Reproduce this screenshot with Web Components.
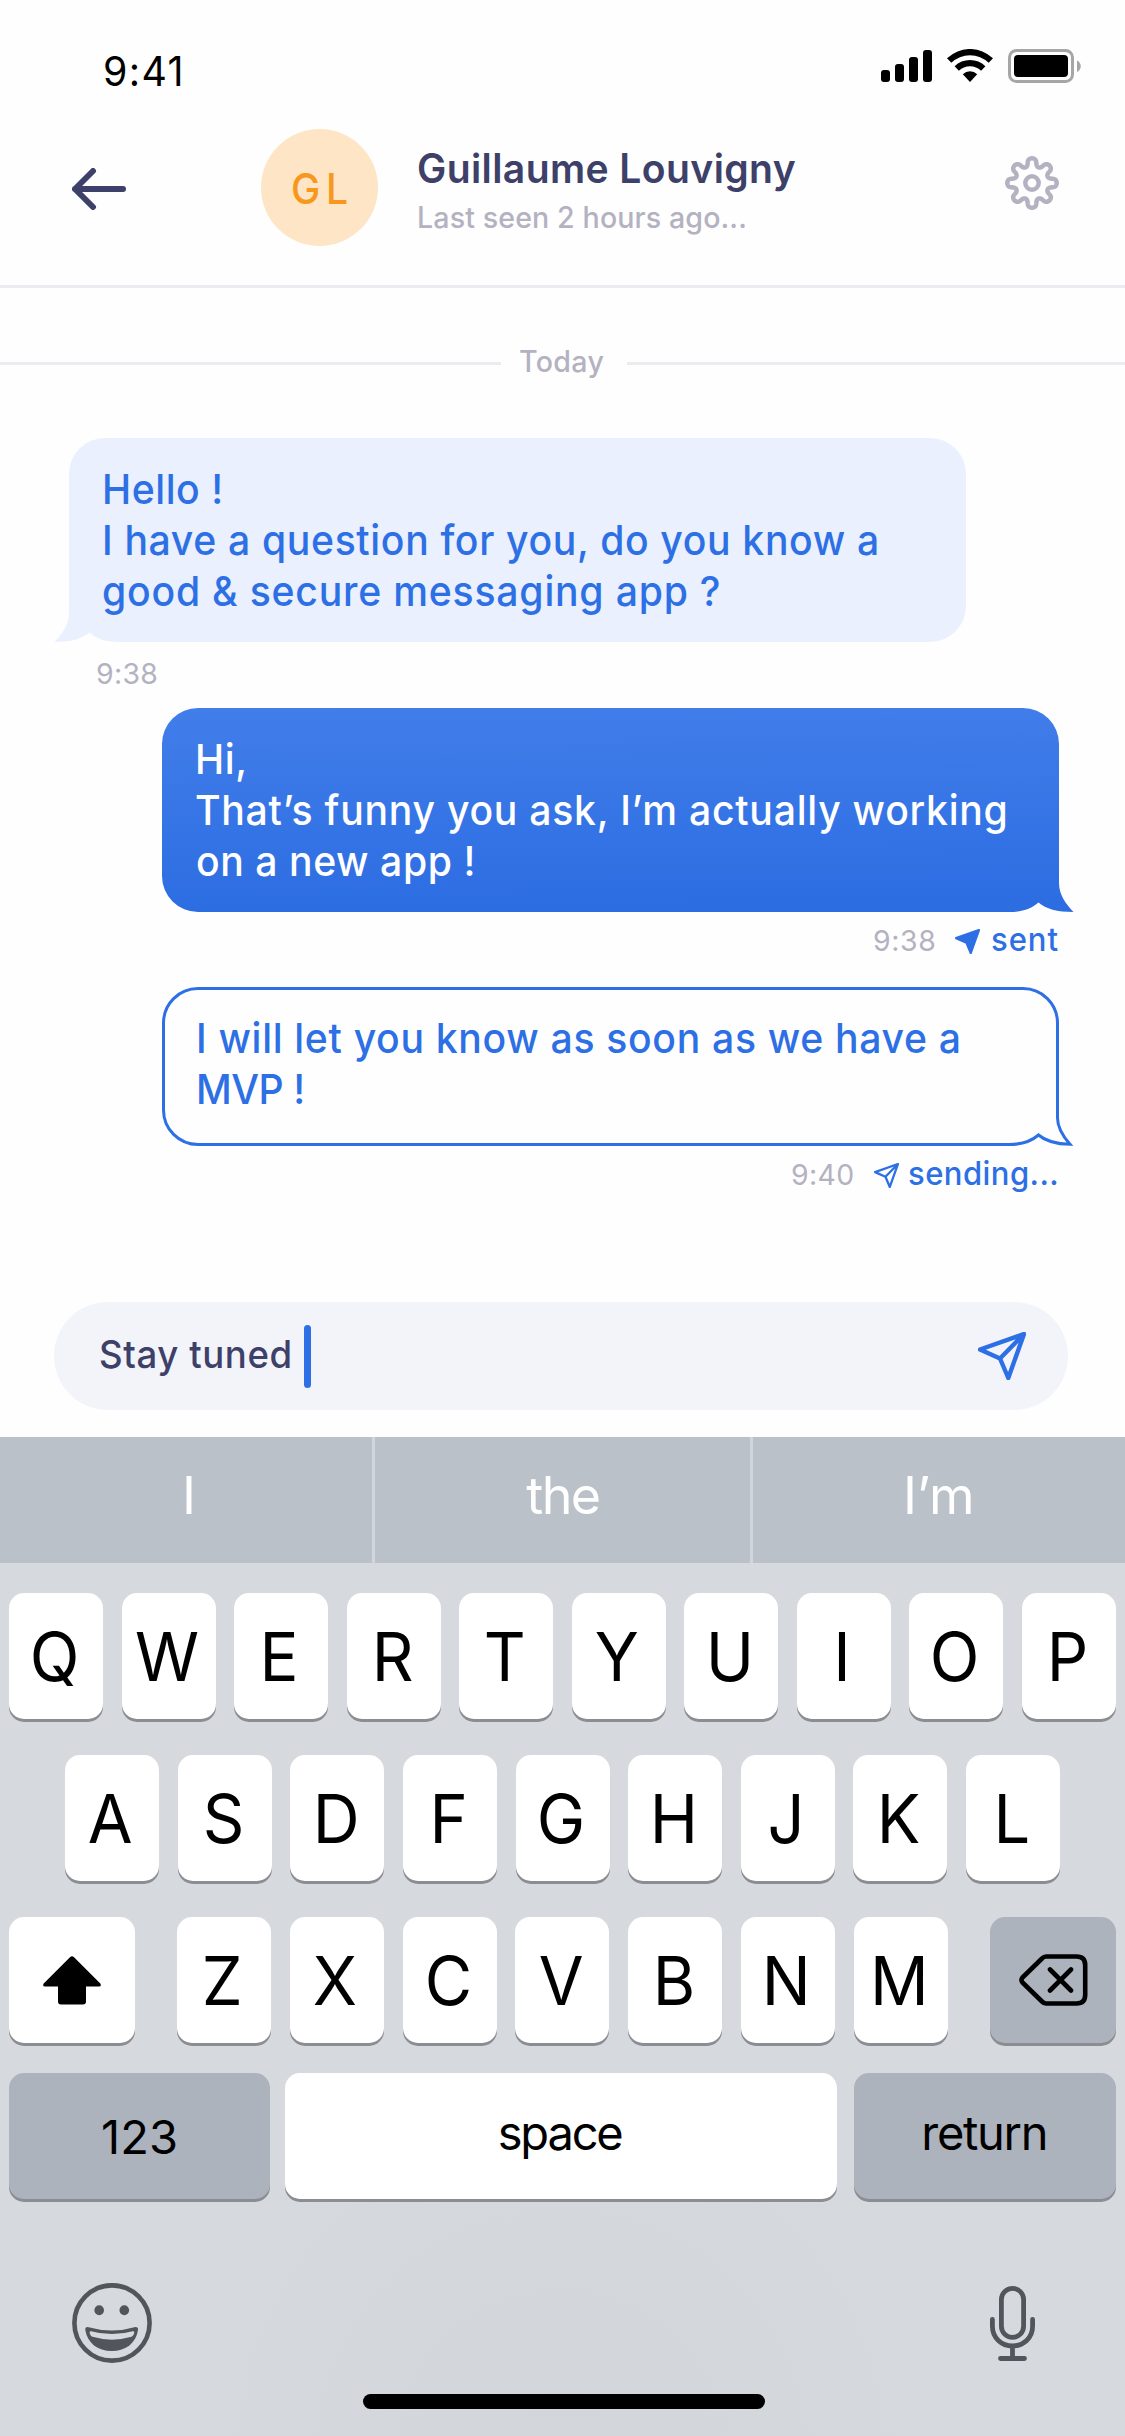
<!DOCTYPE html>
<html lang="en">
<head>
<meta charset="utf-8">
<title>Messaging</title>
<style>
html,body{margin:0;padding:0;background:#fefefe}
body{width:1125px;height:2436px;overflow:hidden;font-family:Inter,"Liberation Sans",sans-serif;-webkit-font-smoothing:antialiased}
</style>
</head>
<body>
<chat-screen></chat-screen>
<script>
const define = (name, html, init) => customElements.define(name, class extends HTMLElement {
  connectedCallback() {
    if (this.shadowRoot) return;
    const root = this.attachShadow({ mode: 'open' });
    root.innerHTML = typeof html === 'function' ? html(this) : html;
    if (init) init(this, root);
  }
});

/* One line of text, tracked so that its ink is exactly `w` pixels wide.
   --narrow condenses the letterforms before tracking. */
const pen = document.createElement('canvas').getContext('2d');
define('fit-text', `<style>
  :host{display:block;white-space:pre;flex:none}
  span{display:block;width:max-content;transform-origin:0 0}
</style><span><slot></slot></span>`, (host, root) => {
  const cs = getComputedStyle(host), text = host.textContent, w = +host.getAttribute('w');
  const k = parseFloat(cs.getPropertyValue('--narrow')) || 1;
  pen.font = `${cs.fontWeight} ${cs.fontSize} ${cs.fontFamily}`;
  const m = pen.measureText(text);
  const ink = m.actualBoundingBoxLeft + m.actualBoundingBoxRight;
  const ls = text.length > 1 ? (w / k - ink) / (text.length - 1) : 0;
  const span = root.querySelector('span');
  host.style.width = w + 'px';
  span.style.letterSpacing = ls.toFixed(3) + 'px';
  span.style.marginLeft = (m.actualBoundingBoxLeft * k).toFixed(2) + 'px';
  span.style.marginRight = '-200px';
  if (k !== 1) span.style.transform = `scaleX(${k})`;
});

define('status-bar', `<style>
  :host{display:flex;justify-content:space-between;box-sizing:border-box;height:129px;padding:46px 44px 0 105px;font-size:41px;line-height:50px;color:#000;--narrow:.96}
  svg{display:block;margin-top:3px}
</style>
<fit-text w="76">9:41</fit-text>
<svg width="200" height="34" viewBox="0 0 200 34">
  <rect x="0" y="21" width="9" height="12" rx="3"/><rect x="14" y="15" width="9" height="18" rx="3"/>
  <rect x="28" y="8" width="9" height="25" rx="3"/><rect x="42" y="1" width="9" height="32" rx="3"/>
  <path d="M66 9.3A33 33 0 0 1 112 9.3L107.7 13.8A26.800 26.800 0 0 0 70.300 13.800Z"/>
  <path d="M73.600 17.200A22 22 0 0 1 104.400 17.200L100.100 21.800A15.700 15.700 0 0 0 77.900 21.800Z"/>
  <path d="M81.800 25.200A10.500 10.500 0 0 1 96.200 25.200L89 33Z"/>
  <rect x="128.500" y="1.500" width="63" height="31" rx="7" fill="none" stroke="#a6a6a6" stroke-width="3"/>
  <rect x="133" y="6" width="54" height="22" rx="4"/>
  <path d="M196 11.500C201 14 201 20.500 196 23Z" fill="#a6a6a6"/>
</svg>`);

define('settings-icon', () => {
  let d = '';
  for (let i = 0; i < 320; i++) {
    const t = i / 320 * Math.PI * 2, a = t + .035 * Math.sin(16 * t) + .012 * Math.sin(8 * t);
    const r = 20.800 + 3.900 * Math.cos(8 * t);
    d += (i ? 'L' : 'M') + (27 + r * Math.sin(a)).toFixed(2) + ' ' + (27 - r * Math.cos(a)).toFixed(2);
  }
  return `<style>:host{display:block}svg{display:block}</style>
  <svg width="54" height="54" fill="none" stroke="#b4b2c1" stroke-width="4.500" stroke-linejoin="round"><path d="${d}Z"/><circle cx="27" cy="27" r="6.700"/></svg>`;
});

define('chat-header', `<style>
  :host{display:flex;box-sizing:border-box;height:159px;border-bottom:3px solid #ebebf0;padding:0 66px 0 72px}
  .back{display:block;margin:39px 135px 0 0;flex:none}
  .avatar{box-sizing:border-box;width:117px;height:117px;border-radius:50%;background:#fde5c5;color:#f7981d;padding:33px 0 0 31.500px;font-size:43px;line-height:52px;font-weight:500;--narrow:.91}
  .who{margin-left:41px;padding-top:15px}
  .name{font-size:40.500px;line-height:49px;font-weight:600;color:#3d4068;--narrow:.965}
  .seen{margin-top:4px;font-size:29.500px;line-height:41px;font-weight:500;color:#b4b2c1;--narrow:.97}
  settings-icon{margin:27px 0 0 auto}
</style>
<svg class="back" width="54" height="42" fill="none" stroke="#3d4068" stroke-width="6" stroke-linecap="round" stroke-linejoin="round"><path d="M51 21H3M21 3L3 21L21 39"/></svg>
<div class="avatar"><fit-text w="54">GL</fit-text></div>
<div class="who"><div class="name"><fit-text w="377">Guillaume Louvigny</fit-text></div>
<div class="seen"><fit-text w="326">Last seen 2 hours ago...</fit-text></div></div>
<settings-icon></settings-icon>`);

define('day-divider', `<style>
  :host{display:flex;padding-top:56px;font-size:29.500px;line-height:35px;font-weight:500;color:#b4b2c1;--narrow:.97}
  i{height:3px;background:#ebebf0;margin-top:17.500px}
  i:first-of-type{width:501px;margin-right:19px} i:last-of-type{flex:1;margin-left:23px}
</style><i></i><fit-text w="84">Today</fit-text><i></i>`);

define('paper-plane', h => `<style>:host{display:block;flex:none}svg{display:block}</style>
<svg width="${h.getAttribute('size')}" height="${h.getAttribute('size')}" viewBox="0 0 48 48" fill="none" stroke="#2d6fe4" stroke-width="4.400" stroke-linejoin="round">
${h.hasAttribute('solid') ? '<path fill="#2d6fe4" d="M46 2L2 17.500L22 26.500L30.300 46Z"/>' : '<path d="M46 2L2 17.500L22 26.500L30.300 46ZM46 2L22 26.500"/>'}</svg>`);

/* Speech bubble: an SVG outline with a tail shares a grid cell with the text. */
define('chat-bubble', el => {
  const h = +el.getAttribute('h'), kind = el.getAttribute('kind');
  const solid = `M36 0H861A36 36 0 0 1 897 36V${h-29}C897 ${h-17} 904 ${h-8} 911.500 ${h}C895 ${h} 884 ${h-3} 876.500 ${h-9.500}C869 ${h-3} 860 ${h} 847 ${h}H36A36 36 0 0 1 0 ${h-36}V36A36 36 0 0 1 36 0Z`;
  const line = `M36 1.500H861A34.500 34.500 0 0 1 895.500 36V${h-28}C895.500 ${h-17} 902 ${h-8.500} 908 ${h-1.700}C894 ${h-2} 884 ${h-4.500} 876.500 ${h-11}C869 ${h-4.500} 860 ${h-1.500} 847 ${h-1.500}H36A34.500 34.500 0 0 1 1.500 ${h-36}V36A34.500 34.500 0 0 1 36 1.500Z`;
  const shape = {
    received: `<path d="${solid}" transform="matrix(-1 0 0 1 897 0)" fill="#eaf0fd"/>`,
    sent: `<defs><linearGradient id="g" x1="0" y1="0" x2=".04" y2="1"><stop stop-color="#427eea"/><stop offset="1" stop-color="#2c6de2"/></linearGradient></defs><path d="${solid}" fill="url(#g)"/>`,
    pending: `<path d="${line}" fill="none" stroke="#2d6fe4" stroke-width="3"/>`
  }[kind];
  return `<style>
  :host{display:grid;width:897px;height:${h}px;margin-left:${kind === 'received' ? 69 : 162}px;font-size:41px;line-height:51px;font-weight:450;--narrow:.955;color:${kind === 'sent' ? '#fff' : '#2d6fe4'}}
  svg,div{grid-area:1/1} svg{display:block;overflow:visible}
  div{padding:26px 0 0 ${kind === 'received' ? 34 : 35}px}
  </style><svg width="897" height="${h}">${shape}</svg><div><slot></slot></div>`;
});

define('message-meta', `<style>
  :host{display:flex;align-items:baseline;justify-content:flex-end;color:#b4b2c1;font-size:29px;line-height:35px;--narrow:.98}
  ::slotted(.state){font-size:32.500px;line-height:39px;font-weight:450;color:#2d6fe4;--narrow:.955}
  ::slotted(paper-plane){align-self:flex-start;margin-top:9px}
</style><slot></slot>`);

define('message-composer', `<style>
  :host{display:flex;box-sizing:border-box;height:108px;margin:0 57px 27px 54px;padding:0 42px 0 46px;border-radius:54px;background:#f2f4f9;font-size:38.500px;line-height:46px;font-weight:450;color:#3d4068;--narrow:.95}
  fit-text{margin-top:29px}
  i{width:6.500px;height:63px;margin:22.500px 0 0 13.900px;border-radius:4px;background:#2d6fe4}
  paper-plane{margin:30px 0 0 auto}
</style><fit-text w="190.400">Stay tuned</fit-text><i></i><paper-plane size="48"></paper-plane>`);

define('suggestion-bar', `<style>
  :host{display:grid;grid-template-columns:372px 3px 375px 3px 372px;height:126px;background:#bac1c9;color:#fff;font-size:52px;line-height:63px}
  i{background:#d2d6db} div{display:flex;justify-content:center;padding:27px 0 0}
  .first{padding-left:5px}
</style><div class="first"><fit-text w="5">I</fit-text></div><i></i><div><fit-text w="72.600">the</fit-text></div><i></i><div><fit-text w="64">I’m</fit-text></div>`);

define('kb-key', h => `<style>
  :host{display:flex;justify-content:center;flex:none;box-sizing:border-box;width:${h.getAttribute('w') || 94}px;height:126px;border-radius:15px;
    background:${h.hasAttribute('dark') ? '#acb3bd' : '#fff'};box-shadow:0 3px 0 #8b8d92;font-size:67px;line-height:81px;padding-top:23px;color:#000}
  ::slotted(svg){display:block}
  .cap{margin-left:-3px;transform:scaleX(.97)}
</style>${h.children.length ? '<slot></slot>' : '<div class="cap"><slot></slot></div>'}`);

define('key-board', () => {
  const keys = s => [...s].map(c => `<kb-key>${c}</kb-key>`).join('');
  return `<style>
  :host{display:flex;flex-direction:column;height:999px;background:radial-gradient(circle 420px at 562px 1020px,#d2d5da,#d6d9de) #d6d9de}
  .row{display:flex;justify-content:space-between;padding:0 9px;margin-bottom:36px}
  .first{margin-top:30px}.second{padding:0 65px}.third{margin-bottom:30px}
  .letters{display:flex;justify-content:space-between;width:771px}
  .fn{padding-top:31px;font-size:47px;line-height:57px}
  .num{padding-top:35px}
  .return{margin-left:2px}
  .tools{display:flex;justify-content:space-between;padding:48px 90px 0 72px;height:78px}
  .tools svg{display:block}
  .home{width:402px;height:15px;border-radius:8px;background:#000;margin:69px 0 0 363px}
  </style>
  <suggestion-bar></suggestion-bar>
  <div class="row first">${keys('QWERTYUIOP')}</div>
  <div class="row second">${keys('ASDFGHJKL')}</div>
  <div class="row third">
    <kb-key w="126"><svg width="58" height="49" style="margin-top:16px" viewBox="0 0 58 49"><path d="M27.200 .9Q29 -.5 30.800 .9L57.300 27.600Q58.800 30.500 56 30.500H43V45.500Q43 48.500 40 48.500H18Q15 48.500 15 45.500V30.500H2Q-.8 30.500 .7 27.600Z"/></svg></kb-key>
    <div class="letters">${keys('ZXCVBNM')}</div>
    <kb-key w="126" dark><svg width="69" height="52" style="margin-top:14px" viewBox="0 0 69 52" fill="none" stroke="#000" stroke-width="4.600" stroke-linecap="round" stroke-linejoin="round"><path d="M27 2.500H57.500Q66.200 2.500 66.200 11.200V40.800Q66.200 49.500 57.500 49.500H27Q25 49.500 23 47.500L3.500 28.500Q1.500 26 3.500 23.500L23 4.500Q25 2.500 27 2.500ZM31 15.500L52 36.500M52 15.500L31 36.500"/></svg></kb-key>
  </div>
  <div class="row" style="margin-bottom:0">
    <kb-key w="261" dark class="fn num"><fit-text w="72.800">123</fit-text></kb-key>
    <kb-key w="552" class="fn"><fit-text w="122.700">space</fit-text></kb-key>
    <kb-key w="262" dark class="fn return"><fit-text w="121.400">return</fit-text></kb-key>
  </div>
  <div class="tools">
    <svg width="80" height="80" style="margin-top:36px" viewBox="0 0 80 80"><circle cx="40" cy="40" r="37.600" fill="none" stroke="#52565c" stroke-width="4.600"/><g fill="#52565c"><ellipse cx="27.200" cy="27.300" rx="4.800" ry="5"/><ellipse cx="52.300" cy="27.300" rx="4.800" ry="5"/>
    <path fill-rule="evenodd" d="M15.500 44Q40 51 63.500 44Q66.500 44 66 47C64 60 54 68 39.800 68C25.500 68 15.500 60 13.300 47Q13 44 15.500 44ZM19 48.200C17.500 48 17.300 49 18 51Q18.800 53.500 20.500 53.800Q40 59.500 59.500 53.800Q61 53.300 61.900 51C62.500 49 62.500 48 60.800 48.200Q40 54 19 48.200Z"/></g></svg>
    <svg width="45" height="75" style="margin-top:39px;margin-right:0" viewBox="0 0 45 75" fill="none" stroke="#52565c" stroke-width="4.800" stroke-linecap="round"><rect x="11.400" y="2.400" width="22.200" height="49" rx="11.100"/><path d="M2.400 33.500V40C2.400 52 11.500 60 22.500 60S42.600 52 42.600 40V33.500M22.500 60V72.500M10.500 72.500H34.500"/></svg>
  </div>
  <div class="home"></div>`;
});

define('chat-screen', `<style>
  :host{display:flex;flex-direction:column;width:1125px;height:2436px;background:#fefefe}
  main{flex:1;display:flex;flex-direction:column}
  chat-bubble.one{margin-top:59px}
  message-meta.in{justify-content:flex-start;margin:14px 0 17px 97px}
  message-meta.out{margin:8px 67px 28px 0}
  message-meta.last{margin-right:68px}
</style>
<status-bar></status-bar>
<chat-header></chat-header>
<main>
  <day-divider></day-divider>
  <chat-bubble class="one" kind="received" h="204"><fit-text w="116" style="margin-left:2px">Hello !</fit-text><fit-text w="772.500" style="margin-left:2px">I have a question for you, do you know a</fit-text><fit-text w="616">good &amp; secure messaging app ?</fit-text></chat-bubble>
  <message-meta class="in"><fit-text w="60">9:38</fit-text></message-meta>
  <chat-bubble kind="sent" h="204"><fit-text w="46" style="margin-left:1px">Hi,</fit-text><fit-text w="810" style="margin-left:-1px">That’s funny you ask, I’m actually working</fit-text><fit-text w="276">on a new app !</fit-text></chat-bubble>
  <message-meta class="out"><fit-text w="61">9:38</fit-text><paper-plane size="25" solid style="margin-left:20px"></paper-plane><fit-text class="state" w="66" style="margin-left:12px">sent</fit-text></message-meta>
  <chat-bubble kind="pending" h="159"><fit-text w="760" style="margin-left:2px">I will let you know as soon as we have a</fit-text><fit-text w="104" style="margin-left:2px">MVP !</fit-text></chat-bubble>
  <message-meta class="out last"><fit-text w="61">9:40</fit-text><paper-plane size="25" style="margin-left:21px"></paper-plane><fit-text class="state" w="148" style="margin-left:10px">sending...</fit-text></message-meta>
</main>
<message-composer></message-composer>
<key-board></key-board>`);
</script>
</body>
</html>
